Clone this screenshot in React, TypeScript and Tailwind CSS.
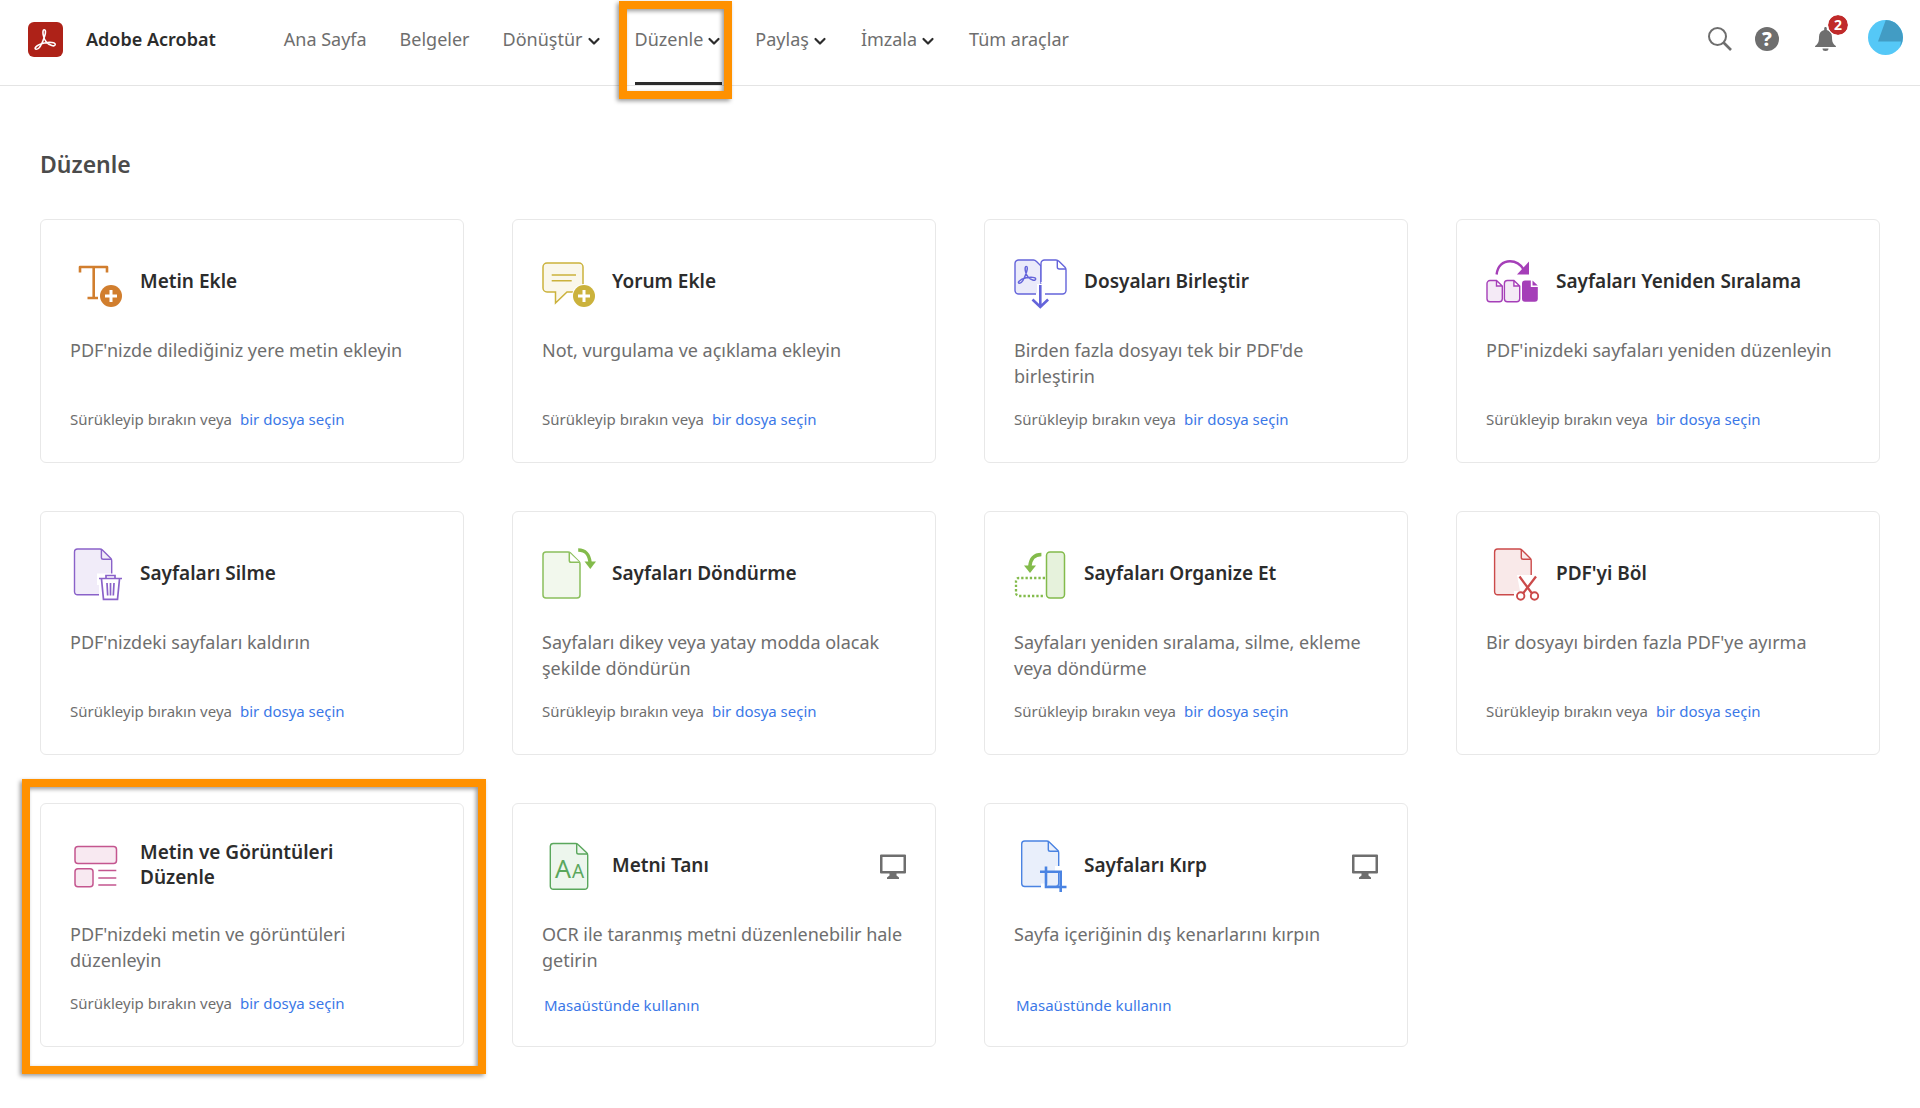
import React from 'react';

interface Tool {
  id: string;
  title: string;
  description: string;
  icon: React.ReactNode;
  desktop?: boolean;
  highlighted?: boolean;
}

interface NavItem {
  label: string;
  menu?: boolean;
  active?: boolean;
}

const PlusBadge = ({ cx, color }: { cx: number; color: string }) => (
  <g>
    <circle cx={cx} cy="43" r="12" fill="#fff" />
    <circle cx={cx} cy="43" r="11" fill={color} />
    <path d={`M${cx - 6} 43h12M${cx} 37v12`} stroke="#fff" strokeWidth="3" />
  </g>
);

const AcrobatMark = ({ color, width }: { color: string; width: number }) => (
  <path
    d="M10.6 2.2c1.9 0 1.6 3.2.6 6.3-1.5 4.700-5 13.300-8.200 13.300-3.200 0-.9-4.300 7.800-6.300 5.400-1.200 11.200-.7 10.900 1.500-.4 2.800-5.800.8-8.800-2.400C9.500 11.100 8.400 2.200 10.600 2.200z"
    fill="none"
    stroke={color}
    strokeWidth={width}
    strokeLinejoin="round"
  />
);

const TextIcon = () => (
  <svg className="size-14" viewBox="0 0 56 56" fill="none" stroke="#d17e2e" strokeWidth="2.600">
    <path d="M10 19.500V14h27v5.500M23.700 14v31M17.500 45h10.500" strokeLinejoin="round" />
    <g stroke="none"><PlusBadge cx={41} color="#d17e2e" /></g>
  </svg>
);

const CommentIcon = () => (
  <svg className="size-14" viewBox="0 0 56 56" fill="none" stroke="#cbb23c" strokeWidth="1.500">
    <path d="M5 10h32a4 4 0 0 1 4 4v20a4 4 0 0 1-4 5H25L13.500 50V39H5a4 4 0 0 1-4-4V14a4 4 0 0 1 4-4z" fill="#faf7eb" />
    <path d="M9.700 22H34M9.700 27.700h20" strokeWidth="1.600" />
    <g stroke="none"><PlusBadge cx={42} color="#cbb23c" /></g>
  </svg>
);

const CombineIcon = () => (
  <svg className="size-14" viewBox="0 0 56 56" fill="none" stroke="#6464da" strokeWidth="1.400">
    <path d="M22 41H4.500A3.500 3.500 0 0 1 1 37.500v-27A3.500 3.500 0 0 1 4.500 7h15c1.500 0 2 .5 3 1.500l4.500 4.500v19" fill="#ebebfa" />
    <path d="M27 29V10.500A3.500 3.500 0 0 1 30.500 7H42c1.500 0 2.200.5 3.200 1.500l5.600 5.600c1 1 1.200 1.700 1.200 3v20.400a3.500 3.500 0 0 1-3.500 3.500H31" fill="#fff" />
    <path d="M43.300 7.200V14a2 2 0 0 0 2 2H52" />
    <path d="M26 31v23" stroke="#fff" strokeWidth="6" />
    <path d="M26.300 32v22M18.500 46.500l7.800 7.500 7.800-7.500" strokeWidth="2.600" />
    <g transform="translate(3 11.500) scale(0.86)">
      <AcrobatMark color="#6464da" width={1.7} />
    </g>
  </svg>
);

const ReorderIcon = () => (
  <svg className="size-14" viewBox="0 0 56 56" fill="none" stroke="#a53fb8" strokeWidth="1.400">
    <path d="M10.600 21.500C11.500 13 17 8.300 24 8.300c6 0 10.500 3 14 8.500" strokeWidth="2.400" />
    <path d="M43 8.500v13H31z" fill="#a53fb8" stroke="none" />
    <path d="M4 27.500h6.500L16.300 33v12.700a3 3 0 0 1-3 3H4a3 3 0 0 1-3-3V30.500a3 3 0 0 1 3-3zM10.500 27.500V33h5.800" fill="#f4eaf6" />
    <path d="M21.400 27.500h6.500l5.800 5.500v12.700a3 3 0 0 1-3 3h-9.300a3 3 0 0 1-3-3V30.500a3 3 0 0 1 3-3zM27.900 27.500V33h5.800" fill="#f4eaf6" />
    <path d="M39 27.500h5.800V34h7v11.700a3 3 0 0 1-3 3H39a3 3 0 0 1-3-3V30.500a3 3 0 0 1 3-3zM46.500 27.500l5.300 5h-5.300z" fill="#a53fb8" stroke="none" />
  </svg>
);

const DeleteIcon = () => (
  <svg className="size-14" viewBox="0 0 56 56" fill="none" stroke="#8a62c9" strokeWidth="1.400">
    <path d="M7.500 4h22.400c1 0 1.800.3 2.500 1l8.300 8.300c.7.700 1 1.500 1 2.500v31c0 1.700-1.300 3-3 3H7.500a3 3 0 0 1-3-3V7a3 3 0 0 1 3-3z" fill="#f1ecf9" />
    <path d="M31.400 4.500v8c0 1 .8 1.800 1.800 1.800h8" />
    <path d="M27 28.500h26.500V56H29V40h-2z" fill="#fff" stroke="none" />
    <path d="M29 33.500h23M36 33v-2.500h9V33M31.500 34l2 20.300h14l2-20.300M37 38l.7 12.500M40.500 38v12.500M44 38l-.7 12.500" strokeWidth="1.700" />
  </svg>
);

const RotateIcon = () => (
  <svg className="size-14" viewBox="0 0 56 56" fill="none" stroke="#8bbf5c" strokeWidth="1.500">
    <path d="M4 7h22c1 0 1.800.3 2.500 1l8.500 8.500c.7.700 1 1.500 1 2.500v31a3 3 0 0 1-3 3H4a3 3 0 0 1-3-3V10a3 3 0 0 1 3-3z" fill="#f2f8ed" />
    <path d="M27.300 7.500v8c0 1 .8 1.800 1.800 1.800h8.400" fill="#fff" />
    <path d="M36.200 5c8 0 11 4.500 12 13" stroke="#83bb4b" strokeWidth="3.400" />
    <path d="M42.500 16.500H54L48.300 24z" fill="#83bb4b" stroke="none" />
  </svg>
);

const OrganizeIcon = () => (
  <svg className="size-14" viewBox="0 0 56 56" fill="none" stroke="#83bb4b">
    <rect x="32.500" y="7" width="18" height="46" rx="3.500" fill="#e6f2dc" strokeWidth="1.500" />
    <path d="M31 33H5a3 3 0 0 0-3 3v12a3 3 0 0 0 3 3h26" strokeWidth="2.300" strokeDasharray="2.300 2" />
    <path d="M27.400 9.500c-8 0-11 4.500-11.600 12" strokeWidth="3.400" />
    <path d="M10 20.500h12L16 28z" fill="#83bb4b" stroke="none" />
  </svg>
);

const SplitIcon = () => (
  <svg className="size-14" viewBox="0 0 56 56" fill="none" stroke="#cb4a4a" strokeWidth="1.400">
    <path d="M11.600 4h21.800c1 0 1.800.3 2.500 1l8.300 8.300c.7.700 1 1.500 1 2.500v31c0 1.700-1.300 3-3 3H11.600a3 3 0 0 1-3-3V7a3 3 0 0 1 3-3z" fill="#f9e9e9" />
    <path d="M35.300 4.500v8c0 1 .8 1.800 1.800 1.800h8" />
    <path d="M31 30h22v26H28V46h6z" fill="#fff" stroke="none" />
    <path d="M33.500 31.500L46 48.500M50 31.500L37 48.500" strokeWidth="2.300" />
    <circle cx="34.700" cy="51" r="3.700" strokeWidth="1.900" />
    <circle cx="48.500" cy="51" r="3.700" strokeWidth="1.900" />
  </svg>
);

const EditIcon = () => (
  <svg className="size-14" viewBox="0 0 56 56" fill="#f8e9f1" stroke="#c4568f" strokeWidth="1.500">
    <rect x="5" y="9.500" width="41.500" height="17" rx="3" />
    <rect x="5" y="31.800" width="18" height="18" rx="3" />
    <path d="M28.300 33.500h18M28.300 41h18M28.300 48h18" />
  </svg>
);

const RecognizeIcon = () => (
  <svg className="size-14" viewBox="0 0 56 56" fill="none" stroke="#5aa75c" strokeWidth="1.400">
    <path d="M11.300 6.500h22.200c1 0 1.800.3 2.500 1l8.700 8.300c.7.700 1 1.500 1 2.500v31a3 3 0 0 1-3 3H11.300a3 3 0 0 1-3-3v-40a3 3 0 0 1 3-2.800z" fill="#edf6ed" />
    <path d="M34.700 7v8.200c0 1 .8 1.800 1.800 1.800h9" />
    <text x="13" y="40.500" fontSize="25" fill="#5aa75c" stroke="none">A</text>
    <text x="30" y="40.500" fontSize="19" fill="#5aa75c" stroke="none">A</text>
  </svg>
);

const CropIcon = () => (
  <svg className="size-14" viewBox="0 0 56 56" fill="none" stroke="#4a83e2" strokeWidth="1.400">
    <path d="M10.700 4h22c1 0 1.800.3 2.500 1l8.500 8.300c.7.700 1 1.500 1 2.500v30.700a3 3 0 0 1-3 3h-31a3 3 0 0 1-3-3V7a3 3 0 0 1 3-3z" fill="#e9effb" />
    <path d="M34.300 4.500v8c0 1 .8 1.800 1.800 1.800h8.500" />
    <path d="M42.500 30.500h4V34h-4zM28.500 48h4v3h-4z" fill="#fff" stroke="#fff" strokeWidth="3" />
    <path d="M32 29.500V50h20.500M26 34.700h20.700V55" strokeWidth="2.600" />
  </svg>
);

const DesktopIcon = () => (
  <svg className="size-[26px]" viewBox="0 0 26 26" fill="#6e6e6e">
    <path fillRule="evenodd" d="M1 .5h24a1 1 0 0 1 1 1v17a1 1 0 0 1-1 1h-8.500v2l2.500 2v1.500H7v-1.500l2.500-2v-2H1a1 1 0 0 1-1-1v-17a1 1 0 0 1 1-1zM2.500 3v14h21V3z" />
  </svg>
);

const navItems: NavItem[] = [
  { label: 'Ana Sayfa' },
  { label: 'Belgeler' },
  { label: 'Dönüştür', menu: true },
  { label: 'Düzenle', menu: true, active: true },
  { label: 'Paylaş', menu: true },
  { label: 'İmzala', menu: true },
  { label: 'Tüm araçlar' },
];

const tools: Tool[] = [
  { id: 'add-text', title: 'Metin Ekle', description: "PDF'nizde dilediğiniz yere metin ekleyin", icon: <TextIcon /> },
  { id: 'add-comment', title: 'Yorum Ekle', description: 'Not, vurgulama ve açıklama ekleyin', icon: <CommentIcon /> },
  { id: 'combine', title: 'Dosyaları Birleştir', description: "Birden fazla dosyayı tek bir PDF'de birleştirin", icon: <CombineIcon /> },
  { id: 'reorder', title: 'Sayfaları Yeniden Sıralama', description: "PDF'inizdeki sayfaları yeniden düzenleyin", icon: <ReorderIcon /> },
  { id: 'delete', title: 'Sayfaları Silme', description: "PDF'nizdeki sayfaları kaldırın", icon: <DeleteIcon /> },
  { id: 'rotate', title: 'Sayfaları Döndürme', description: 'Sayfaları dikey veya yatay modda olacak şekilde döndürün', icon: <RotateIcon /> },
  { id: 'organize', title: 'Sayfaları Organize Et', description: 'Sayfaları yeniden sıralama, silme, ekleme veya döndürme', icon: <OrganizeIcon /> },
  { id: 'split', title: "PDF'yi Böl", description: "Bir dosyayı birden fazla PDF'ye ayırma", icon: <SplitIcon /> },
  { id: 'edit', title: 'Metin ve Görüntüleri Düzenle', description: "PDF'nizdeki metin ve görüntüleri düzenleyin", icon: <EditIcon />, highlighted: true },
  { id: 'ocr', title: 'Metni Tanı', description: 'OCR ile taranmış metni düzenlenebilir hale getirin', icon: <RecognizeIcon />, desktop: true },
  { id: 'crop', title: 'Sayfaları Kırp', description: 'Sayfa içeriğinin dış kenarlarını kırpın', icon: <CropIcon />, desktop: true },
];

const Header = () => (
  <header className="flex h-[86px] items-stretch justify-between border-b border-[#e4e4e4] pr-[17px] pl-7">
    <div className="flex items-stretch pb-[7px]">
      <a href="#home" className="flex items-center gap-[23px] text-lg font-semibold text-[#2c2c2c]">
        <svg className="size-[35px]" viewBox="0 0 35 35">
          <rect width="35" height="35" rx="6" fill="#ae2218" />
          <g transform="translate(5.500 5.500)">
            <AcrobatMark color="#fff" width={1.6} />
          </g>
        </svg>
        Adobe Acrobat
      </a>
      <nav className="ml-[68px] flex items-stretch gap-[33px] text-lg text-[#6e6e6e]">
        {navItems.map((item) =>
          item.menu ? (
            <button key={item.label} type="button" className="relative flex cursor-pointer items-center gap-[3px]">
              {item.label}
              <svg className="mt-1 h-3 w-4" viewBox="0 0 16 12" fill="none" stroke="#2c2c2c" strokeWidth="2.200" strokeLinecap="round" strokeLinejoin="round">
                <path d="M3.500 4L8 8.500 12.500 4" />
              </svg>
              {item.active && (
                <>
                  <span className="absolute inset-x-0 -bottom-[7px] h-[3px] bg-[#2c2c2c]" />
                  <span className="pointer-events-none absolute top-px -right-2.5 -bottom-[21px] -left-4 border-8 border-[#ff9100] drop-shadow-[-2px_2px_2px_rgba(0,0,0,0.4)]" />
                </>
              )}
            </button>
          ) : (
            <a key={item.label} href="#nav" className="flex items-center">{item.label}</a>
          )
        )}
      </nav>
    </div>

    <div className="flex items-center pb-[7px]">
      <button type="button" aria-label="Ara" className="mr-[23px] cursor-pointer">
        <svg className="size-6" viewBox="0 0 24 24" fill="none" stroke="#6e6e6e">
          <circle cx="9.500" cy="9.500" r="8.500" strokeWidth="2" />
          <path d="M15.500 15.500l7.500 7.500" strokeWidth="2.600" />
        </svg>
      </button>
      <button type="button" aria-label="Yardım" className="mr-9 flex size-6 cursor-pointer items-center justify-center rounded-full bg-[#6e6e6e] text-xl leading-none font-extrabold text-white">
        ?
      </button>
      <button type="button" aria-label="Bildirimler" className="relative mr-8 cursor-pointer">
        <svg className="h-6 w-[21px]" viewBox="0 0 21 24" fill="#6e6e6e">
          <path d="M10.500 0c.8 0 1.300.6 1.300 1.400v1.500c3.500.8 5.200 3.500 5.200 7 0 4.500.8 6.500 3.200 8.500.6.500.8.800.8 1.600H0c0-.8.200-1.100.8-1.600C3.200 16.400 4 14.400 4 9.900c0-3.500 1.700-6.200 5.200-7V1.400C9.200.6 9.700 0 10.500 0zM7.500 21.500h6a3 2.500 0 0 1-6 0z" />
        </svg>
        <span className="absolute -top-3 -right-3 flex size-5 items-center justify-center rounded-full bg-[#c02a2a] text-sm font-bold text-white outline-1 outline-white">2</span>
      </button>
      <button type="button" aria-label="Profil" className="mb-1 cursor-pointer">
        <svg className="size-[35px]" viewBox="0 0 35 35">
          <circle cx="17.500" cy="17.500" r="17.500" fill="#55c8f7" />
          <path d="M10 21.500L17.800 0A17.500 17.500 0 0 1 32 27l1-5.500z" fill="#429cc4" />
        </svg>
      </button>
    </div>
  </header>
);

const ToolCard = ({ tool }: { tool: Tool }) => (
  <article className="relative flex flex-col rounded-md border border-[#e8e8e8] px-[29px] pt-[33px] pb-[31px]">
    <div className="flex items-center">
      {tool.icon}
      <h2 className="ml-3.5 max-w-64 flex-1 text-[19px] leading-[25px] font-semibold text-[#2c2c2c]">{tool.title}</h2>
      {tool.desktop && (
        <span className="ml-auto pt-1"><DesktopIcon /></span>
      )}
    </div>
    <p className="mt-7 min-h-[52px] text-lg leading-[26px] text-[#6e6e6e]">{tool.description}</p>
    <div className="mt-[18px] flex h-6 gap-2 text-[15px] leading-6 text-[#6e6e6e]">
      {tool.desktop ? (
        <a href="#desktop" className="pt-0.5 pl-0.5 text-[#3b78e7]">Masaüstünde kullanın</a>
      ) : (
        <>
          <span>Sürükleyip bırakın veya</span>
          <button type="button" className="cursor-pointer text-[#3b78e7]">bir dosya seçin</button>
        </>
      )}
    </div>
    {tool.highlighted && (
      <div className="pointer-events-none absolute -top-[25px] -right-[23px] -bottom-7 -left-[19px] border-8 border-[#ff9100] drop-shadow-[-2px_2px_2px_rgba(0,0,0,0.4)]" />
    )}
  </article>
);

const App: React.FC = () => {
  return (
    <div className="min-h-screen bg-white font-['Noto_Sans',sans-serif]">
      <Header />
      <main className="px-10 pt-[62px] pb-[61px]">
        <h1 className="text-[23px] leading-8 font-semibold text-[#4b4b4b]">Düzenle</h1>
        <div className="mt-[39px] grid grid-cols-4 gap-12">
          {tools.map((tool) => (
            <ToolCard key={tool.id} tool={tool} />
          ))}
        </div>
      </main>
    </div>
  );
};

export default App;
